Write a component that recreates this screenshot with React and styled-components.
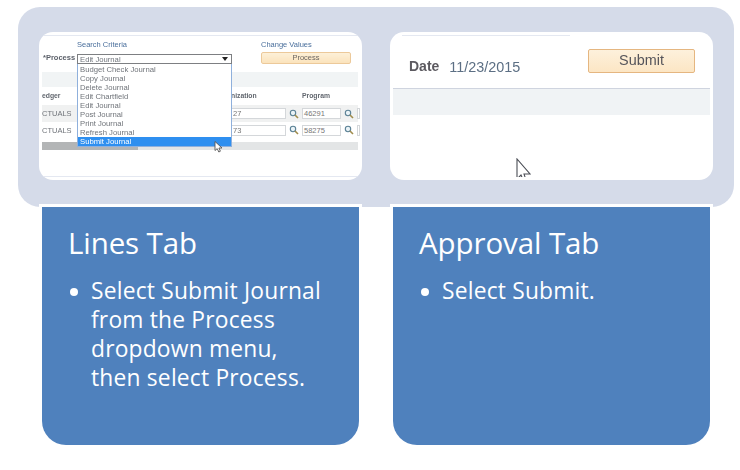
import React from 'react'
import styled, { createGlobalStyle } from 'styled-components'

const GlobalStyle = createGlobalStyle`
html, body {
  margin: 0;
  background: #fff;
}
`

const Page = styled.div`
width: 740px;
height: 470px;
overflow: hidden;
background: #fff;
`

const ShotsPanel = styled.div`
margin: 7px 0 0 18px;
width: 716px;
height: 200px;
box-sizing: border-box;
padding: 25px 21px 27px;
background: #d5dbe9;
border-radius: 22px;
display: grid;
grid-template-columns: 323px 323px;
column-gap: 28px;
`

const ShotCard = styled.div`
position: relative;
background: #fff;
border-radius: 14px;
overflow: hidden;
font-family: "Liberation Sans", Arial, sans-serif;
`

const LinesShot = styled.div`
height: 100%;
padding: 3px 4px 3px 3px;
box-sizing: border-box;
display: flex;
flex-direction: column;
filter: blur(0.35px);
`

const Rule = styled.div`
height: 1px;
margin: ${p => p.$auto ? 'auto' : 0} ${p => p.$right || 0}px 0 ${p => p.$left || 0}px;
background: #e4e8f1;
flex-shrink: 0;
`

const CriteriaRow = styled.div`
display: grid;
grid-template-columns: 35px 184px 90px;
align-content: start;
height: 35px;
box-sizing: border-box;
padding-top: 4px;
`

const LinkLabel = styled.div`
font-size: 7.5px;
line-height: 9px;
color: #4a6f9c;
grid-column: ${p => p.$col};
grid-row: 1;
`

const ProcessLabel = styled.div`
grid-column: 1;
grid-row: 2;
font-size: 7.5px;
font-weight: bold;
line-height: 10px;
color: #5a5f68;
padding: 4px 0 0 1px;
white-space: nowrap;
`

const ProcessButton = styled.div`
grid-column: 3;
grid-row: 2;
height: 12px;
margin-top: 3px;
width: 90px;
box-sizing: border-box;
background: linear-gradient(#fdf0d8, #fbe3bc);
border: 1px solid #ecc99a;
border-radius: 2px;
font-size: 7.5px;
line-height: 10px;
text-align: center;
color: #6a6460;
`

const Band = styled.div`
height: ${p => p.$h}px;
margin-top: ${p => p.$top || 0}px;
background: #f1f4f5;
flex-shrink: 0;
`

const TableRow = styled.div`
display: grid;
grid-template-columns: 189px 55px 16px 39px 16px 1fr;
align-items: center;
height: ${p => p.$h}px;
background: ${p => p.$bg || 'transparent'};
margin-top: ${p => p.$top || 0}px;
color: #70747a;
font-size: 7.5px;
flex-shrink: 0;
`

const HeadCell = styled.div`
font-size: 6.8px;
font-weight: bold;
color: #62676f;
white-space: nowrap;
`

const ValueBox = styled.div`
height: 11px;
box-sizing: border-box;
background: #fff;
border: 1px solid #d4d7da;
font-size: 7.5px;
line-height: 9px;
padding-left: 1px;
color: #777;
`

const IconCell = styled.div`
display: flex;
justify-content: center;
align-items: center;
`

const ScrollBar = styled.div`
height: 8px;
margin-top: 4px;
background: #e3e5e6;
flex-shrink: 0;
`

const ScrollThumb = styled.div`
width: 96px;
height: 100%;
background: #b3b5b6;
`

const Dropdown = styled.div`
position: absolute;
left: 38px;
top: 22px;
width: 155px;
filter: blur(0.35px);
`

const DropdownValue = styled.div`
height: 10px;
box-sizing: border-box;
border: 1px solid #7d7f82;
display: flex;
justify-content: space-between;
align-items: center;
padding: 0 3px 0 2px;
background: #fff;
font-size: 7.7px;
color: #70757c;
`

const DropdownList = styled.div`
border: 1px solid #8fb0dc;
border-top: 0;
padding-top: 1px;
background: #fff;
`

const DropdownItem = styled.div`
height: 9px;
font-size: 7.7px;
line-height: 9px;
padding-left: 2px;
color: ${p => (p.$active ? '#fff' : '#70747a')};
background: ${p => (p.$active ? '#2e8ff0' : 'transparent')};
`

const ArrowDown = styled.span`
width: 0;
height: 0;
border-left: 3px solid transparent;
border-right: 3px solid transparent;
border-top: 4px solid #222;
`

const SmallCursor = styled.svg`
position: absolute;
left: 175px;
top: 109px;
`

const ApprovalShot = styled.div`
height: 100%;
padding-top: 3px;
box-sizing: border-box;
filter: blur(0.25px);
`

const SubmitRow = styled.div`
display: flex;
align-items: flex-start;
height: 52px;
box-sizing: border-box;
padding: 13px 18px 0 19px;
`

const DateLabel = styled.div`
font-size: 14px;
font-weight: bold;
line-height: 16px;
color: #5c5a60;
margin-top: 9px;
`

const DateValue = styled.div`
font-size: 14.4px;
line-height: 16px;
color: #5c6f84;
margin: 10px auto 0 10px;
`

const SubmitButton = styled.div`
width: 107px;
height: 24px;
box-sizing: border-box;
background: linear-gradient(#fdf1dc, #fce6c4);
border: 1px solid #e5b680;
border-radius: 2px;
font-size: 14.4px;
line-height: 20px;
text-align: center;
color: #55545a;
`

const ApprovalBand = styled.div`
margin: 0 3px;
height: 26px;
background: #f0f3f5;
border-top: 1px solid #cfd4df;
`

const BigCursor = styled.svg`
position: absolute;
left: 126px;
top: 126px;
`

const TabsRow = styled.div`
margin-left: 42px;
display: grid;
grid-template-columns: 317px 317px;
column-gap: 34px;
`

const TabCard = styled.div`
height: 238px;
box-sizing: border-box;
padding: 17px 32px 0 26px;
background: #4f81bd;
border-radius: 0 0 24px 24px;
box-shadow: 0 0 0 3px #fff;
color: #fff;
font-family: "Open Sans", "Noto Sans", sans-serif;
`

const TabTitle = styled.div`
font-size: 29.5px;
line-height: 38px;
letter-spacing: -0.1px;
`

const Bullets = styled.ul`
list-style: none;
margin: 14px 0 0;
padding: 0;
`

const Bullet = styled.li`
display: grid;
grid-template-columns: 23px 1fr;
font-size: 22.8px;
font-weight: 500;
line-height: 29px;
letter-spacing: 0.2px;
&::before {
  content: "";
  width: 8px;
  height: 8px;
  margin: 12px 0 0 2px;
  border-radius: 50%;
  background: #fff;
}
`

const journalOptions = [
  'Budget Check Journal',
  'Copy Journal',
  'Delete Journal',
  'Edit Chartfield',
  'Edit Journal',
  'Post Journal',
  'Print Journal',
  'Refresh Journal',
  'Submit Journal',
]

const lineRows = [
  { ledger: 'CTUALS', org: '27', program: '46291', bg: '#f0f1f1', top: 2, h: 17 },
  { ledger: 'CTUALS', org: '73', program: '58275', bg: 'transparent', top: 0, h: 16 },
]

function Magnifier() {
  return (
    <svg width="10" height="10" viewBox="0 0 10 10">
      <circle cx="4" cy="4" r="2.7" fill="#eaf3f7" stroke="#5c8296" strokeWidth="1.1" />
      <path d="M6 6 L9 9" stroke="#a08c4c" strokeWidth="1.6" />
    </svg>
  )
}

function LinesScreenshot() {
  return (
    <ShotCard>
      <LinesShot>
        <Rule />
        <CriteriaRow>
          <LinkLabel $col={2}>Search Criteria</LinkLabel>
          <LinkLabel $col={3}>Change Values</LinkLabel>
          <ProcessLabel>*Process</ProcessLabel>
          <ProcessButton>Process</ProcessButton>
        </CriteriaRow>
        <Band $h={15} $top={1} />
        <TableRow $h={16}>
          <HeadCell>edger</HeadCell>
          <HeadCell>nization</HeadCell>
          <span />
          <HeadCell>Program</HeadCell>
        </TableRow>
        {lineRows.map(row => (
          <TableRow key={row.org} $h={row.h} $top={row.top} $bg={row.bg}>
            <div>{row.ledger}</div>
            <ValueBox>{row.org}</ValueBox>
            <IconCell><Magnifier /></IconCell>
            <ValueBox>{row.program}</ValueBox>
            <IconCell><Magnifier /></IconCell>
            <ValueBox />
          </TableRow>
        ))}
        <ScrollBar>
          <ScrollThumb />
        </ScrollBar>
        <Rule $auto />
      </LinesShot>
      <Dropdown>
        <DropdownValue>
          Edit Journal
          <ArrowDown />
        </DropdownValue>
        <DropdownList>
          {journalOptions.map(option => (
            <DropdownItem key={option} $active={option === 'Submit Journal'}>{option}</DropdownItem>
          ))}
        </DropdownList>
      </Dropdown>
      <SmallCursor width="10" height="12" viewBox="0 0 10 12">
        <path d="M1 0.5 V9.5 L3.2 7.6 L4.8 11 L6.4 10.2 L4.9 7 H8 Z" fill="#fff" stroke="#555" strokeWidth="0.9" />
      </SmallCursor>
    </ShotCard>
  )
}

function ApprovalScreenshot() {
  return (
    <ShotCard>
      <ApprovalShot>
        <Rule $left={12} $right={143} />
        <SubmitRow>
          <DateLabel>Date</DateLabel>
          <DateValue>11/23/2015</DateValue>
          <SubmitButton>Submit</SubmitButton>
        </SubmitRow>
        <ApprovalBand />
      </ApprovalShot>
      <BigCursor width="16" height="19" viewBox="0 0 16 19">
        <path d="M1 1 V21 L5 17 L6.5 20.5 H9.5 L8 16 H14 Z" fill="#fff" stroke="#4a4d55" strokeWidth="1.1" />
      </BigCursor>
    </ShotCard>
  )
}

export default function App() {
  return (
    <Page>
      <GlobalStyle />
      <ShotsPanel>
        <LinesScreenshot />
        <ApprovalScreenshot />
      </ShotsPanel>
      <TabsRow>
        <TabCard>
          <TabTitle>Lines Tab</TabTitle>
          <Bullets>
            <Bullet>
              <span>Select Submit Journal from the Process dropdown menu, then select Process.</span>
            </Bullet>
          </Bullets>
        </TabCard>
        <TabCard>
          <TabTitle>Approval Tab</TabTitle>
          <Bullets>
            <Bullet>
              <span>Select Submit.</span>
            </Bullet>
          </Bullets>
        </TabCard>
      </TabsRow>
    </Page>
  )
}
